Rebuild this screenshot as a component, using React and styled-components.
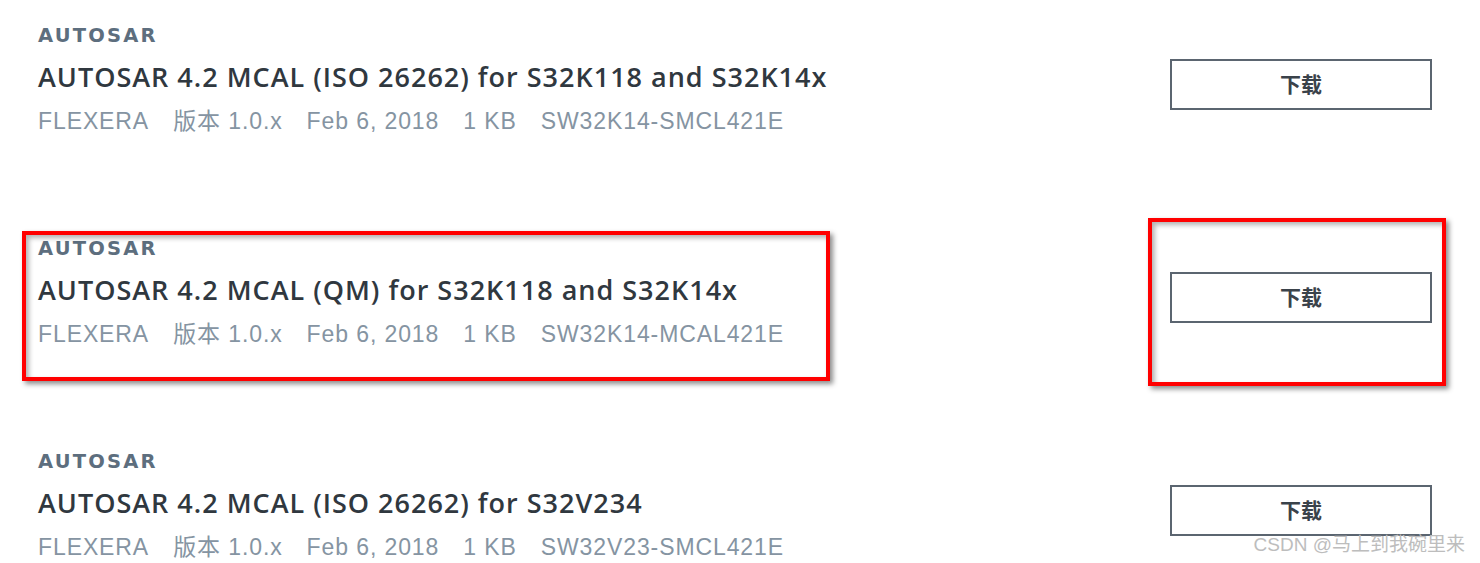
import React from "react";
import styled, { createGlobalStyle } from "styled-components";

const Global = createGlobalStyle`
  html, body { margin: 0; padding: 0; background: #ffffff; }
  body { width: 1480px; height: 563px; overflow: hidden; font-family: "Open Sans", "Noto Sans CJK SC", sans-serif; }
`;

const Page = styled.div`
  position: relative;
  width: 1480px;
  height: 563px;
  overflow: hidden;
  background: #fff;
`;

const Row = styled.div`
  position: relative;
  height: 213px;
  display: flex;
  align-items: flex-start;
  justify-content: space-between;
  padding: 0 48px 0 38px;
  box-sizing: border-box;
`;

const Info = styled.div`
  display: flex;
  flex-direction: column;
  padding-top: 24px;
`;

const Category = styled.div`
  font-family: "DejaVu Sans", sans-serif;
  font-weight: 700;
  font-size: 19.5px;
  line-height: 24px;
  letter-spacing: 2.2px;
  color: #5d6e7e;
`;

const Title = styled.div`
  margin-top: 13px;
  font-family: "Open Sans", sans-serif;
  font-weight: 600;
  font-size: 27px;
  line-height: 32px;
  letter-spacing: 1px;
  color: #30383f;
`;

const Meta = styled.div`
  margin-top: 14px;
  display: flex;
  gap: 24px;
  font-family: "Liberation Sans", "Noto Sans CJK SC", sans-serif;
  font-size: 23px;
  line-height: 28px;
  letter-spacing: 0.9px;
  color: #8594a2;
`;

const DownloadButton = styled.button`
  margin-top: 59px;
  width: 262px;
  height: 51px;
  background: #fff;
  border: 2px solid #5b6570;
  font-family: "Noto Sans CJK SC", sans-serif;
  font-weight: 700;
  font-size: 21px;
  line-height: 1;
  color: #3a424a;
  cursor: pointer;
  padding: 0 0 2px;
`;

const Highlight = styled.div`
  position: absolute;
  left: ${(p) => p.$x}px;
  top: ${(p) => p.$y}px;
  width: ${(p) => p.$w}px;
  height: ${(p) => p.$h}px;
  box-sizing: border-box;
  border: 4px solid #ff0000;
  box-shadow: 3px 3px 5px rgba(0, 0, 0, 0.45), inset 3px 3px 5px rgba(0, 0, 0, 0.3);
  pointer-events: none;
`;

const Watermark = styled.div`
  position: absolute;
  right: 15px;
  bottom: 8px;
  font-family: "Liberation Sans", "Noto Sans CJK SC", sans-serif;
  font-size: 19px;
  line-height: 20px;
  color: #bdbdbd;
`;

const items = [
  {
    title: "AUTOSAR 4.2 MCAL (ISO 26262) for S32K118 and S32K14x",
    code: "SW32K14-SMCL421E",
  },
  {
    title: "AUTOSAR 4.2 MCAL (QM) for S32K118 and S32K14x",
    code: "SW32K14-MCAL421E",
    highlight: true,
  },
  {
    title: "AUTOSAR 4.2 MCAL (ISO 26262) for S32V234",
    code: "SW32V23-SMCL421E",
  },
];

export default function App() {
  return (
    <Page>
      <Global />
      {items.map((it) => (
        <Row key={it.code}>
          <Info>
            <Category>AUTOSAR</Category>
            <Title>{it.title}</Title>
            <Meta>
              <span>FLEXERA</span>
              <span>版本 1.0.x</span>
              <span>Feb 6, 2018</span>
              <span>1 KB</span>
              <span>{it.code}</span>
            </Meta>
          </Info>
          <DownloadButton>下载</DownloadButton>
          {it.highlight && (
            <>
              <Highlight $x={22} $y={18} $w={808} $h={150} />
              <Highlight $x={1148} $y={5} $w={298} $h={168} />
            </>
          )}
        </Row>
      ))}
      <Watermark>CSDN @马上到我碗里来</Watermark>
    </Page>
  );
}
